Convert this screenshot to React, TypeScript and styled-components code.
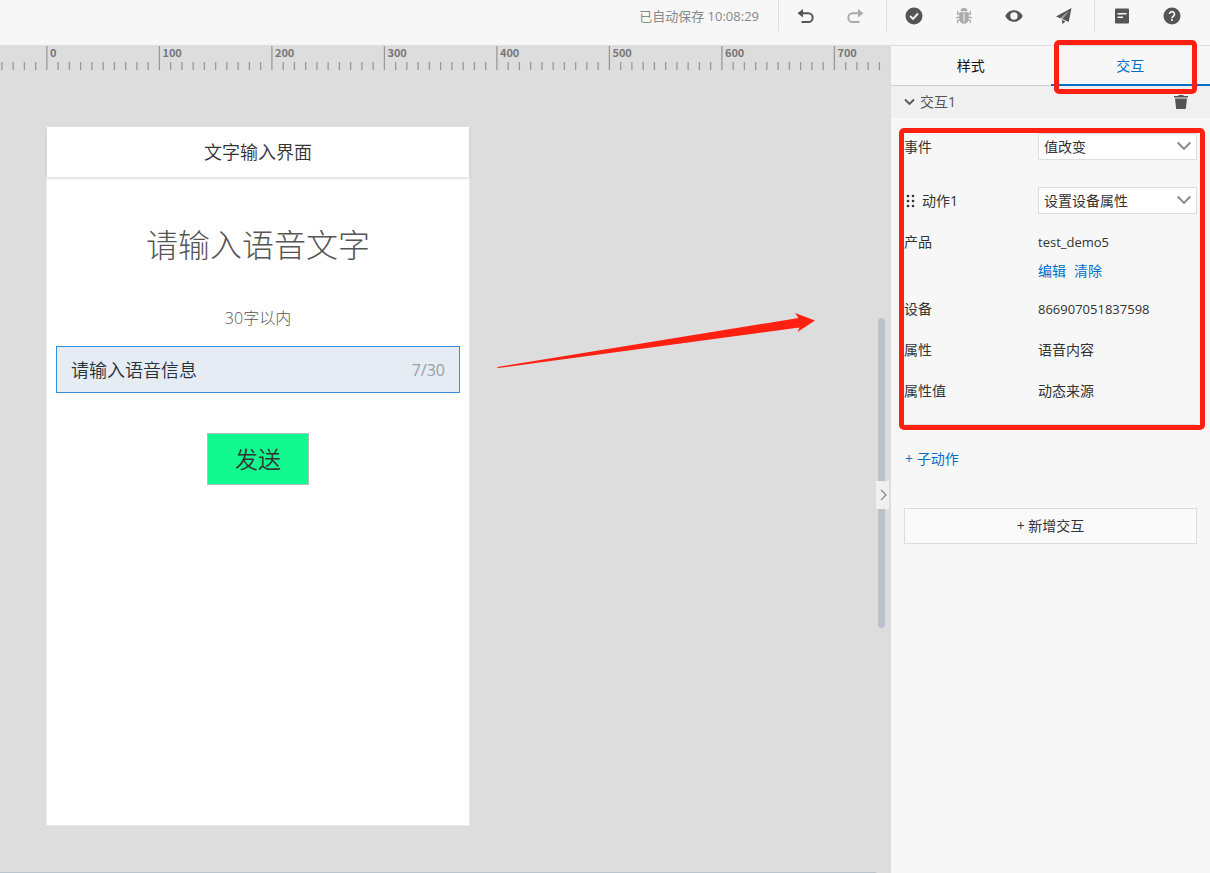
import React from 'react';
import styled, { createGlobalStyle } from 'styled-components';

const INK = '#555';
const MARK = '#ff2012';

const GlobalStyle = createGlobalStyle`
  * { box-sizing: border-box; }
  body {
    margin: 0;
    background: #f7f7f7;
    color: #333;
    font-family: "Open Sans", "Noto Sans CJK SC", sans-serif;
    font-size: 14px;
    line-height: 20px;
  }
  button, input, select { font: inherit; color: inherit; }
`;

const Page = styled.div`
  display: flex;
  flex-direction: column;
  min-height: 100vh;
`;

const TopBar = styled.header`
  display: flex;
  justify-content: flex-end;
  height: 45px;
`;

const SavedAt = styled.span`
  margin-right: 19px;
  font-size: 13px;
  line-height: 32px;
  color: #888;
`;

const ToolGroup = styled.div<{ $last?: boolean }>`
  display: flex;
  height: 31px;
  padding: 0 ${p => (p.$last ? 13 : 5)}px 0 2px;
  border-left: 1px solid #ddd;
`;

const ToolButton = styled.button`
  display: flex;
  align-items: center;
  justify-content: center;
  width: 50px;
  padding: 0;
  border: 0;
  background: none;
  color: ${INK};
  &:disabled { color: #aaa; }
`;

const Body = styled.div`
  display: flex;
  flex: 1;
`;

const Canvas = styled.main`
  position: relative;
  flex: 1;
  min-width: 0;
  overflow: hidden;
  background: #ddd;
`;

const RulerSvg = styled.svg`
  display: block;
  width: 100%;
  height: 26px;
  font: 700 11px "Noto Sans CJK SC", sans-serif;
  fill: #777;
`;

const Phone = styled.section`
  display: flex;
  flex-direction: column;
  width: 424px;
  height: 700px;
  margin: 55px 0 48px 46px;
  border: 1px solid #e8e8e8;
  background: #fff;
  font-weight: 350;
`;

const PhoneHeader = styled.h1`
  margin: 0;
  font-size: 18px;
  font-weight: 350;
  line-height: 50px;
  text-align: center;
  color: #333;
  box-shadow: 0 1px 3px rgba(0, 0, 0, 0.2);
`;

const PhoneBody = styled.form`
  display: flex;
  flex-direction: column;
  align-items: center;
  padding: 44px 9px 0;
`;

const Headline = styled.h2`
  margin: 0 0 37px;
  font-size: 32px;
  font-weight: 300;
  line-height: 48px;
  color: #555;
`;

const Hint = styled.label`
  font-size: 16px;
  font-weight: 300;
  line-height: 24px;
  color: #555;
`;

const VoiceField = styled.div`
  display: flex;
  align-items: center;
  align-self: stretch;
  height: 47px;
  margin: 16px 0 40px;
  padding: 0 14px;
  border: 1px solid #3490dc;
  background: #e5ecf4;
`;

const VoiceInput = styled.input`
  flex: 1;
  min-width: 0;
  padding: 0;
  border: 0;
  outline: 0;
  background: none;
  font-size: 18px;
  color: #28303a;
`;

const Counter = styled.span`
  font-size: 16px;
  font-weight: 400;
  color: #999fa6;
`;

const SendButton = styled.button`
  width: 102px;
  height: 52px;
  padding: 0;
  border: 1px solid #a8c4b8;
  background: #12f98f;
  font-size: 23px;
  color: #333;
`;

const Arrow = styled.svg`
  position: absolute;
  left: 496px;
  top: 265px;
`;

const VerticalThumb = styled.div`
  position: absolute;
  right: 5px;
  top: 273px;
  width: 7px;
  height: 310px;
  border-radius: 4px;
  background: #bac2cb;
`;

const HorizontalThumb = styled.div`
  position: absolute;
  left: 0;
  right: 13px;
  bottom: 0;
  height: 2px;
  border-radius: 0 2px 0 0;
  background: #bac2cb;
`;

const Collapse = styled.button`
  position: absolute;
  right: 1px;
  top: 436px;
  display: flex;
  align-items: center;
  justify-content: flex-end;
  width: 13px;
  height: 28px;
  padding: 0 2px 0 0;
  border: 0;
  background: #f0f0f0;
  color: #888;
`;

const Panel = styled.aside`
  width: 320px;
  border-left: 1px solid #ddd;
  border-top: 1px solid #ddd;
`;

const Tabs = styled.div`
  display: flex;
  height: 40px;
`;

const Tab = styled.button<{ $active?: boolean }>`
  position: relative;
  flex: 1;
  padding: 0;
  border: 0;
  background: none;
  color: ${p => (p.$active ? '#0070cc' : '#111')};
  box-shadow: inset 0 ${p => (p.$active ? '-2px #0070cc' : '-1px #ccc')};
`;

const Highlight = styled.div<{ $inset: string }>`
  position: absolute;
  inset: ${p => p.$inset};
  border: 5px solid ${MARK};
  border-radius: 5px;
  pointer-events: none;
`;

const SectionHeader = styled.div`
  display: flex;
  align-items: center;
  justify-content: space-between;
  height: 32px;
  padding: 0 22px 0 13px;
  background: #f0f0f0;
  color: ${INK};
`;

const PlainButton = styled.button`
  display: flex;
  align-items: center;
  gap: 5px;
  padding: 0;
  border: 0;
  background: none;
`;

const ActionForm = styled.div`
  position: relative;
  margin: 0 13px;
  padding: 15px 0 23px;
  border-bottom: 1px solid #ddd;
`;

const Row = styled.div<{ $gap: number }>`
  display: flex;
  align-items: flex-start;
  margin-bottom: ${p => p.$gap}px;
`;

const RowLabel = styled.label<{ $tall?: boolean }>`
  display: flex;
  align-items: center;
  gap: 7px;
  flex: 0 0 134px;
  line-height: ${p => (p.$tall ? 27 : 20)}px;
`;

const RowValue = styled.div<{ $latin?: boolean }>`
  flex: 1;
  font-size: ${p => (p.$latin ? 13 : 14)}px;
`;

const SelectBox = styled.div`
  display: flex;
  align-items: center;
  flex: 1;
  svg { margin-left: -20px; pointer-events: none; }
`;

const Select = styled.select`
  appearance: none;
  width: 100%;
  height: 27px;
  padding: 0 24px 0 5px;
  border: 1px solid #ddd;
  border-radius: 0;
  background: #fff;
`;

const Links = styled.div`
  display: flex;
  gap: 8px;
  margin-top: 9px;
  font-size: 14px;
`;

const Link = styled.a`
  color: #0070cc;
  text-decoration: none;
`;

const SubAction = styled.div`
  margin: 24px 14px 39px;
`;

const AddButton = styled.button`
  display: block;
  width: calc(100% - 26px);
  height: 36px;
  margin: 0 13px;
  padding: 0;
  border: 1px solid #ddd;
  background: #fafafa;
`;

const ticks = Array.from({ length: 79 }, (_, i) => i - 4);

function Ruler() {
  return (
    <RulerSvg>
      {ticks.map(n => {
        const x = 46.9 + n * 11.25;
        const major = n % 10 === 0;
        return (
          <g key={n}>
            <line x1={x} x2={x} y1={major ? 1 : 17} y2={25} stroke="#999" strokeWidth={1.3} />
            {major && <text x={x + 3} y={12}>{n * 10}</text>}
          </g>
        );
      })}
    </RulerSvg>
  );
}

const Icon = ({ children }: { children: React.ReactNode }) => (
  <svg width="20" height="20" viewBox="0 0 20 20" fill="currentColor" aria-hidden="true">{children}</svg>
);

const UndoIcon = () => (
  <Icon>
    <path d="M1.500 7.300 7 3v8.400z" />
    <path d="M6 7.300h6.300a4.300 4.300 0 0 1 0 8.700H5.500" fill="none" stroke="currentColor" strokeWidth="2" />
  </Icon>
);

const RedoIcon = () => (
  <Icon>
    <path d="M17.500 7.300 12 3v8.400z" />
    <path d="M13 7.300H6.700a4.300 4.300 0 0 0 0 8.700h6.800" fill="none" stroke="currentColor" strokeWidth="2" />
  </Icon>
);

const CheckIcon = () => (
  <Icon>
    <circle cx="10" cy="10" r="8.500" />
    <path d="m6.200 10 2.800 2.800 5-5.300" fill="none" stroke="#f7f7f7" strokeWidth="1.900" />
  </Icon>
);

const BugIcon = () => (
  <Icon>
    <path d="M6.500 5.200a3.500 3.200 0 0 1 7 0z" />
    <path d="M5.200 6.200h9.600v6c0 3.300-2 5.500-4.800 5.500s-4.800-2.200-4.800-5.500z" />
    <path d="M10 7.500v8.500" stroke="#ddd" strokeWidth="1.400" />
    <path d="M5.200 8.200H3.600V4.800M14.800 8.200h1.600V4.800M5.200 11.500H2.200M14.800 11.500h3M5.600 14.300H3.700v3M14.400 14.300h1.900v3" fill="none" stroke="currentColor" strokeWidth="1.300" />
  </Icon>
);

const EyeIcon = () => (
  <Icon>
    <path fillRule="evenodd" d="M10 4.200c-4 0-7.200 2.400-8.700 5.800C2.800 13.400 6 15.800 10 15.800s7.200-2.400 8.700-5.800C17.200 6.600 14 4.200 10 4.200zM10 6.300a3.700 3.700 0 1 1 0 7.400 3.700 3.700 0 0 1 0-7.400z" />
  </Icon>
);

const SendIcon = () => (
  <Icon>
    <path d="M17.500 2 2 10.500l4.300 1.700L14.800 5.200 8.200 13l6.500 3zM7.700 13.800 8.500 18l3-2.600z" />
    <path d="M6.300 12.200 14.800 5.200 8.200 13z" fill="#999" />
  </Icon>
);

const NoteIcon = () => (
  <Icon>
    <rect x="3" y="2.500" width="14" height="15" rx="1" />
    <path d="M5.500 7.800h9M5.500 11.200H11" stroke="#f7f7f7" strokeWidth="1.500" />
  </Icon>
);

const HelpIcon = () => (
  <Icon>
    <circle cx="10" cy="10" r="8.500" />
    <path d="M7.500 8a2.500 2.500 0 1 1 3.800 2.200c-.9.500-1.300.9-1.300 2" fill="none" stroke="#f7f7f7" strokeWidth="1.700" />
    <rect x="9.100" y="13.200" width="1.800" height="1.800" fill="#f7f7f7" />
  </Icon>
);

const TrashIcon = () => (
  <svg width="14" height="16" viewBox="0 0 14 16" fill="currentColor" aria-hidden="true">
    <path d="M4.500 1h5v1H14v1.500H0V2h4.500zM1 4.500h12L11.800 15H2.200z" />
  </svg>
);

const Chevron = () => (
  <svg width="14" height="14" viewBox="0 0 14 14" fill="none" stroke="#888" strokeWidth="1.900" aria-hidden="true">
    <path d="m0.700 2.500 6.300 6.500 6.300-6.500" />
  </svg>
);

const FoldIcon = () => (
  <svg width="11" height="10" viewBox="0 0 11 10" fill="none" stroke="currentColor" strokeWidth="1.800" aria-hidden="true">
    <path d="m1 2.500 4.500 4.500L10 2.500" />
  </svg>
);

const DragDots = () => (
  <svg width="11" height="14" viewBox="0 0 11 14" fill="#333" aria-hidden="true">
    {[3, 8].map(x => [2, 7, 12].map(y => <circle key={`${x}-${y}`} cx={x + 1} cy={y} r="1.300" />))}
  </svg>
);

export default function App() {
  return (
    <Page>
      <GlobalStyle />
      <TopBar>
        <SavedAt>已自动保存 10:08:29</SavedAt>
        <ToolGroup>
          <ToolButton aria-label="撤销"><UndoIcon /></ToolButton>
          <ToolButton aria-label="重做" disabled><RedoIcon /></ToolButton>
        </ToolGroup>
        <ToolGroup>
          <ToolButton aria-label="检查"><CheckIcon /></ToolButton>
          <ToolButton aria-label="调试" disabled><BugIcon /></ToolButton>
          <ToolButton aria-label="预览"><EyeIcon /></ToolButton>
          <ToolButton aria-label="发布"><SendIcon /></ToolButton>
        </ToolGroup>
        <ToolGroup $last>
          <ToolButton aria-label="文档"><NoteIcon /></ToolButton>
          <ToolButton aria-label="帮助"><HelpIcon /></ToolButton>
        </ToolGroup>
      </TopBar>
      <Body>
        <Canvas>
          <Ruler />
          <Phone>
            <PhoneHeader>文字输入界面</PhoneHeader>
            <PhoneBody>
              <Headline>请输入语音文字</Headline>
              <Hint htmlFor="voice">30字以内</Hint>
              <VoiceField>
                <VoiceInput id="voice" defaultValue="请输入语音信息" maxLength={30} />
                <Counter>7/30</Counter>
              </VoiceField>
              <SendButton type="button">发送</SendButton>
            </PhoneBody>
          </Phone>
          <Arrow width="320" height="60" fill={MARK} aria-hidden="true">
            <path d="M1 57 302.500 8 299 3l20 7.500L301.500 22l2-4.500L2 58z" />
          </Arrow>
          <VerticalThumb />
          <HorizontalThumb />
          <Collapse aria-label="收起面板">
            <svg width="7" height="12" fill="none" stroke="currentColor" strokeWidth="1.200"><path d="m1 1 5 5-5 5" /></svg>
          </Collapse>
        </Canvas>
        <Panel>
          <Tabs>
            <Tab>样式</Tab>
            <Tab $active>交互<Highlight $inset="-6px 13px -8px 3px" /></Tab>
          </Tabs>
          <SectionHeader>
            <PlainButton><FoldIcon />交互1</PlainButton>
            <PlainButton aria-label="删除"><TrashIcon /></PlainButton>
          </SectionHeader>
          <ActionForm>
            <Row $gap={27}>
              <RowLabel $tall htmlFor="event">事件</RowLabel>
              <SelectBox>
                <Select id="event"><option>值改变</option></Select>
                <Chevron />
              </SelectBox>
            </Row>
            <Row $gap={18}>
              <RowLabel $tall htmlFor="action"><DragDots />动作1</RowLabel>
              <SelectBox>
                <Select id="action"><option>设置设备属性</option></Select>
                <Chevron />
              </SelectBox>
            </Row>
            <Row $gap={18}>
              <RowLabel as="span">产品</RowLabel>
              <RowValue $latin>
                test_demo5
                <Links><Link href="#edit">编辑</Link><Link href="#clear">清除</Link></Links>
              </RowValue>
            </Row>
            <Row $gap={21}>
              <RowLabel as="span">设备</RowLabel>
              <RowValue $latin>866907051837598</RowValue>
            </Row>
            <Row $gap={21}>
              <RowLabel as="span">属性</RowLabel>
              <RowValue>语音内容</RowValue>
            </Row>
            <Row $gap={0}>
              <RowLabel as="span">属性值</RowLabel>
              <RowValue>动态来源</RowValue>
            </Row>
            <Highlight $inset="10px -8px -6px -5px" />
          </ActionForm>
          <SubAction><Link href="#sub">+ 子动作</Link></SubAction>
          <AddButton>+ 新增交互</AddButton>
        </Panel>
      </Body>
    </Page>
  );
}
